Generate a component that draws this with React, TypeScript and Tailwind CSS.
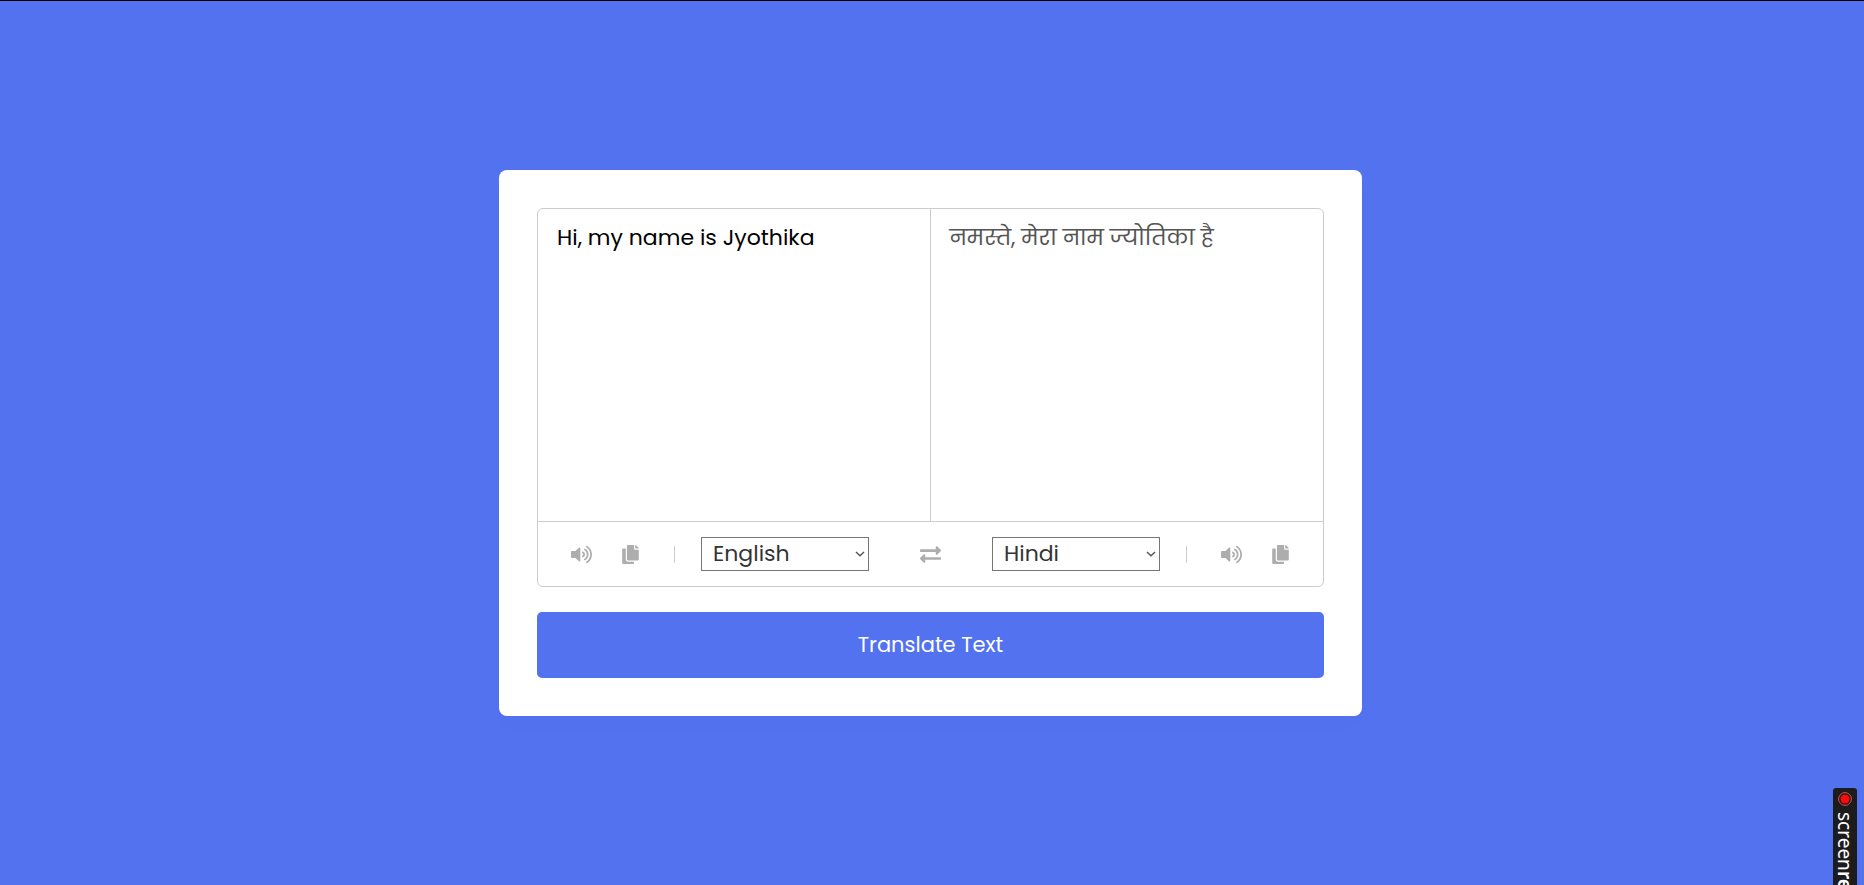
import React, { useState } from "react";
import { FaCopy, FaExchangeAlt, FaVolumeUp } from "react-icons/fa";

const languages = ["English", "Hindi", "French", "German", "Spanish", "Telugu"];

type LanguageProps = {
  label: string;
  value: string;
  onChange: (value: string) => void;
};

function LanguageSelect({ label, value, onChange }: LanguageProps) {
  return (
    <div className="relative">
      <select
        aria-label={label}
        value={value}
        onChange={(e) => onChange(e.target.value)}
        className="block h-[34px] w-[168px] appearance-none border border-[#767676] bg-white pl-[11px] text-[22px] leading-8 text-[#333]"
      >
        {languages.map((name) => (
          <option key={name}>{name}</option>
        ))}
      </select>
      <svg
        viewBox="0 0 10 6"
        className="pointer-events-none absolute top-[14px] right-1 h-[6px] w-[10px]"
        fill="none"
        stroke="#555"
        strokeWidth="1.4"
      >
        <path d="M1 1 L5 4.8 L9 1" />
      </svg>
    </div>
  );
}

function IconPair({ side }: { side: string }) {
  return (
    <div className="flex items-center gap-[29px] text-[#adadad]">
      <button type="button" aria-label={`Listen to ${side} text`} className="text-[21px]">
        <FaVolumeUp />
      </button>
      <button type="button" aria-label={`Copy ${side} text`} className="text-[19px]">
        <FaCopy />
      </button>
    </div>
  );
}

export default function App() {
  const [source, setSource] = useState("Hi, my name is Jyothika");
  const [target, setTarget] = useState("नमस्ते, मेरा नाम ज्योतिका है");
  const [from, setFrom] = useState("English");
  const [to, setTo] = useState("Hindi");

  const swap = () => {
    setSource(target);
    setTarget(source);
    setFrom(to);
    setTo(from);
  };

  return (
    <div className="relative flex min-h-screen items-center justify-center overflow-hidden border-t border-black bg-[#5372f0] pr-[3px] font-[Poppins,Lato,'Noto_Sans_Devanagari',sans-serif]">
      <main className="w-full max-w-[863px] rounded-lg bg-white p-[38px] shadow-[0_10px_20px_rgba(0,0,0,0.01)]">
        <div className="rounded-md border border-[#ccc]">
          <div className="flex border-b border-[#ccc]">
            <textarea
              aria-label="Text to translate"
              spellCheck={false}
              value={source}
              onChange={(e) => setSource(e.target.value)}
              className="block h-[312px] w-1/2 resize-none border-r border-[#ccc] bg-transparent px-[19px] py-3 text-[22px] leading-[34px] text-black outline-none"
            />
            <textarea
              aria-label="Translation"
              readOnly
              value={target}
              className="block h-[312px] w-1/2 resize-none bg-transparent px-[19px] py-3 text-[22px] leading-[34px] text-[#555] outline-none"
            />
          </div>
          <div className="flex h-16 items-center justify-between px-[33px]">
            <div className="flex items-center">
              <IconPair side="source" />
              <div className="mr-[26px] ml-[34px] h-[17px] w-px bg-[#ccc]" />
              <LanguageSelect label="Source language" value={from} onChange={setFrom} />
            </div>
            <button
              type="button"
              aria-label="Swap languages"
              onClick={swap}
              className="text-[21px] text-[#adadad]"
            >
              <FaExchangeAlt />
            </button>
            <div className="flex items-center">
              <LanguageSelect label="Target language" value={to} onChange={setTo} />
              <div className="mr-[34px] ml-[26px] h-[17px] w-px bg-[#ccc]" />
              <IconPair side="translated" />
            </div>
          </div>
        </div>
        <button
          type="button"
          className="mt-[25px] block h-[66px] w-full rounded-[5px] bg-[#5372f0] text-[21px] text-white"
        >
          Translate Text
        </button>
      </main>
      <div className="absolute right-[7px] bottom-0 flex h-[97px] w-6 flex-col items-center overflow-hidden rounded-t-[3px] bg-[#1c1c1c] pt-1 font-['Noto_Sans',sans-serif] text-white">
        <svg viewBox="0 0 14 14" className="size-[14px] shrink-0">
          <circle cx="7" cy="7" r="6.4" fill="none" stroke="#e05050" strokeWidth="1" />
          <circle cx="7" cy="7" r="4.5" fill="#ff0a0a" />
        </svg>
        <p className="mt-[6px] text-[19px] leading-6 whitespace-nowrap [writing-mode:vertical-rl]">
          screen<b className="font-semibold">re</b>
        </p>
      </div>
    </div>
  );
}
